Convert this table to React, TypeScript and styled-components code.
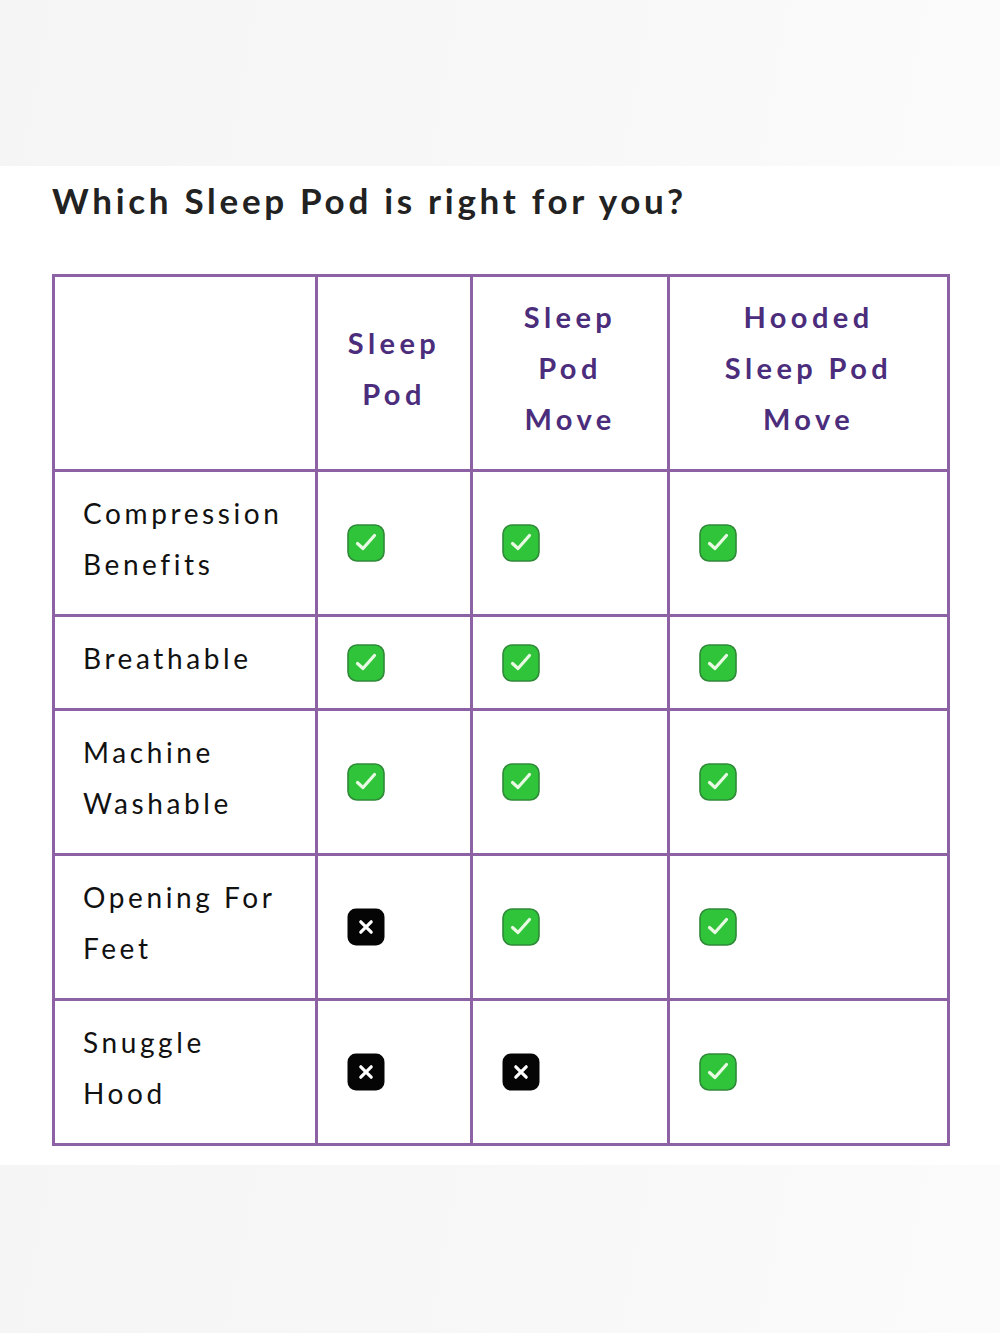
import React from 'react';
import styled, { createGlobalStyle } from 'styled-components';

const GlobalStyle = createGlobalStyle`
  html, body {
    margin: 0;
    padding: 0;
    background: #ffffff;
  }
  body {
    font-family: Lato, "Liberation Sans", sans-serif;
  }
`;

const Page = styled.div`
  width: 1000px;
  min-height: 1333px;
  display: flex;
  flex-direction: column;
`;

const Band = styled.div<{ $height: number }>`
  height: ${(p) => p.$height}px;
  background: linear-gradient(100deg, #f5f5f6 0%, #f8f8f9 60%, #fbfbfb 100%);
`;

const Section = styled.section`
  background: #ffffff;
  padding: 14px 50px 19px 52px;
`;

const Title = styled.h2`
  margin: 0 0 54px;
  font-family: Lato, "Liberation Sans", sans-serif;
  font-weight: 700;
  font-size: 35px;
  line-height: 40px;
  letter-spacing: 3.7px;
  color: #222222;
`;

const Grid = styled.div`
  display: grid;
  grid-template-columns: 260px 152px 194px 277px;
  gap: 3px;
  padding: 3px;
  width: max-content;
  background: #8c62a4;
`;

const HeadCell = styled.div`
  background: #ffffff;
  padding: 14px 4px 25px;
  min-height: 153px;
  display: flex;
  align-items: center;
  justify-content: center;
  text-align: center;
  font-weight: 700;
  font-size: 29px;
  line-height: 51px;
  letter-spacing: 4.4px;
  color: #4b2d7c;
`;

const LabelCell = styled.div`
  background: #ffffff;
  padding: 16px 8px 24px 28px;
  display: flex;
  align-items: center;
  font-size: 28px;
  line-height: 51px;
  letter-spacing: 3.6px;
  color: #111111;
`;

const MarkCell = styled.div`
  background: #ffffff;
  padding: 0 29px;
  display: flex;
  align-items: center;
`;

const Mark = styled.svg`
  width: 38px;
  height: 38px;
  display: block;
`;

const Check = () => (
  <Mark viewBox="0 0 38 38">
    <rect x="1" y="1" width="36" height="36" rx="9" fill="#30c43b" stroke="#2f8a38" strokeWidth="1.6" />
    <polyline
      points="10.5,19.5 16,24.5 27.5,11.5"
      fill="none"
      stroke="#e9fae3"
      strokeWidth="3.2"
      strokeLinecap="round"
      strokeLinejoin="round"
    />
  </Mark>
);

const Cross = () => (
  <Mark viewBox="0 0 38 38">
    <rect x="0.5" y="0.5" width="37" height="37" rx="8.5" fill="#050505" />
    <path d="M13.8 13.8 L24.2 24.2 M24.2 13.8 L13.8 24.2" stroke="#ffffff" strokeWidth="3.2" strokeLinecap="round" />
  </Mark>
);

const products = [
  ['Sleep', 'Pod'],
  ['Sleep', 'Pod', 'Move'],
  ['Hooded', 'Sleep Pod', 'Move'],
];

const features: { label: string[]; has: boolean[] }[] = [
  { label: ['Compression', 'Benefits'], has: [true, true, true] },
  { label: ['Breathable'], has: [true, true, true] },
  { label: ['Machine', 'Washable'], has: [true, true, true] },
  { label: ['Opening For', 'Feet'], has: [false, true, true] },
  { label: ['Snuggle', 'Hood'], has: [false, false, true] },
];

const Lines = ({ lines }: { lines: string[] }) => (
  <div>
    {lines.map((l) => (
      <div key={l}>{l}</div>
    ))}
  </div>
);

export default function App() {
  return (
    <>
      <GlobalStyle />
      <Page>
        <Band $height={166} />
        <Section>
          <Title>Which Sleep Pod is right for you?</Title>
          <Grid>
            <HeadCell />
            {products.map((p, i) => (
              <HeadCell key={i}>
                <Lines lines={p} />
              </HeadCell>
            ))}
            {features.map((f) => (
              <React.Fragment key={f.label.join(' ')}>
                <LabelCell>
                  <Lines lines={f.label} />
                </LabelCell>
                {f.has.map((h, j) => (
                  <MarkCell key={j}>{h ? <Check /> : <Cross />}</MarkCell>
                ))}
              </React.Fragment>
            ))}
          </Grid>
        </Section>
        <Band $height={168} />
      </Page>
    </>
  );
}
